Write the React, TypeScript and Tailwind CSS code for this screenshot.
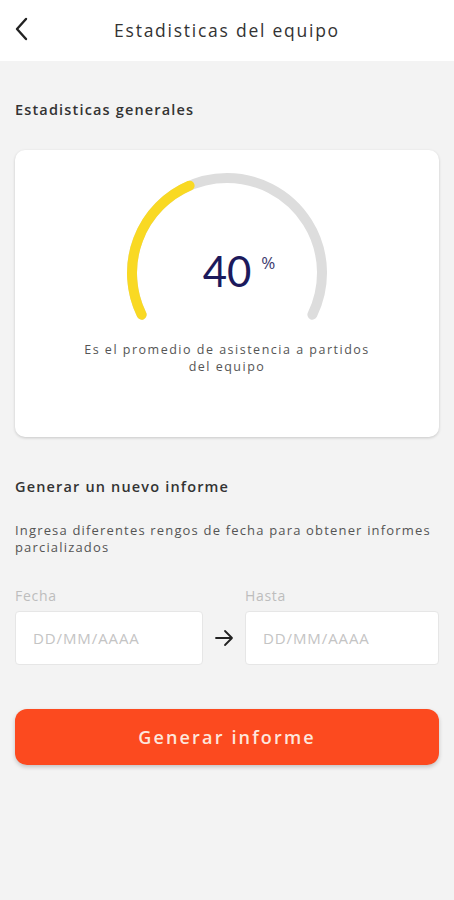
import React from 'react'

const font = { fontFamily: '"Open Sans", "Noto Sans", sans-serif' }

function Gauge({ value }: { value: number }) {
  const cx = 100
  const cy = 100
  const r = 95
  const sweep = 232
  const start = -sweep / 2
  const point = (deg: number) => {
    const rad = (deg * Math.PI) / 180
    return [cx + r * Math.sin(rad), cy - r * Math.cos(rad)]
  }
  const arc = (from: number, to: number) => {
    const [x1, y1] = point(from)
    const [x2, y2] = point(to)
    const large = to - from > 180 ? 1 : 0
    return `M ${x1} ${y1} A ${r} ${r} 0 ${large} 1 ${x2} ${y2}`
  }
  const end = start + (sweep * value) / 100
  return (
    <svg width="210" height="156" viewBox="-5 -5 210 156" className="block">
      <path d={arc(start, sweep / 2)} fill="none" stroke="#dddddd" strokeWidth="10" strokeLinecap="round" />
      <path d={arc(start, end)} fill="none" stroke="#f9d923" strokeWidth="10" strokeLinecap="round" />
    </svg>
  )
}

export default function App() {
  return (
    <div className="flex flex-col min-h-[900px] bg-[#f3f3f3]" style={font}>
      {/* Header */}
      <div className="relative flex items-center justify-center h-[61px] bg-white">
        <button className="absolute left-[12px] top-[16px] text-[#222]">
          <svg width="22" height="26" viewBox="0 0 22 26" fill="none" stroke="currentColor" strokeWidth="2.4" strokeLinecap="round" strokeLinejoin="round">
            <path d="M14 3 L5 13 L14 23" />
          </svg>
        </button>
        <h1 className="text-[17.5px] text-[#333] tracking-[0.1em]">Estadisticas del equipo</h1>
      </div>

      <div className="px-[15px]">
        <h2 className="mt-[39px] text-[14.5px] leading-[20px] font-semibold text-[#333] tracking-[0.08em]">Estadisticas generales</h2>

        {/* Card */}
        <div className="mt-[30px] h-[287px] rounded-[10px] bg-white shadow-[0_1px_3px_rgba(0,0,0,0.18)] flex flex-col items-center pt-[18px]">
          <div className="relative">
            <Gauge value={40} />
            <div className="absolute left-0 right-0 top-[82px] flex justify-center">
              <div className="relative">
                <span className="text-[42px] leading-none text-[#1c1a5c]" style={{ fontFamily: 'Lato, sans-serif' }}>40</span>
                <span className="absolute left-full top-[4px] ml-[10px] text-[17px] leading-none text-[#3c3a6e]">%</span>
              </div>
            </div>
          </div>
          <p className="mt-[17px] text-center text-[12.5px] leading-[17px] text-[#555] tracking-[0.12em]">
            Es el promedio de asistencia a partidos
            <br />
            del equipo
          </p>
        </div>

        <h2 className="mt-[40px] text-[14.5px] leading-[20px] font-semibold text-[#333] tracking-[0.08em]">Generar un nuevo informe</h2>
        <p className="mt-[25px] text-[13px] leading-[17px] text-[#555] tracking-[0.09em]">
          Ingresa diferentes rengos de fecha para obtener informes parcializados
        </p>

        {/* Date range */}
        <div className="mt-[31px] flex items-end">
          <div className="w-[188px] flex flex-col">
            <label className="text-[14px] leading-[18px] text-[#bdbdbd] tracking-[0.05em]">Fecha</label>
            <div className="mt-[6px] h-[54px] rounded-[4px] bg-white border border-[#e6e6e6] flex items-center px-[17px]">
              <span className="text-[15px] text-[#c4c4c4] tracking-[0.06em]">DD/MM/AAAA</span>
            </div>
          </div>
          <div className="h-[54px] w-[42px] flex items-center justify-center">
            <svg width="20" height="18" viewBox="0 0 20 18" fill="none" stroke="#222" strokeWidth="1.8" strokeLinecap="round" strokeLinejoin="round">
              <path d="M2 9 H18 M11 2 L18 9 L11 16" />
            </svg>
          </div>
          <div className="flex-1 flex flex-col">
            <label className="text-[14px] leading-[18px] text-[#bdbdbd] tracking-[0.05em]">Hasta</label>
            <div className="mt-[6px] h-[54px] rounded-[4px] bg-white border border-[#e6e6e6] flex items-center px-[17px]">
              <span className="text-[15px] text-[#c4c4c4] tracking-[0.06em]">DD/MM/AAAA</span>
            </div>
          </div>
        </div>

        <button className="mt-[44px] w-full h-[56px] rounded-[12px] bg-[#fc4a1f] shadow-[0_2px_4px_rgba(0,0,0,0.2)] text-[18px] font-semibold text-[#fde6dc] tracking-[0.12em]">
          Generar informe
        </button>
      </div>
    </div>
  )
}
